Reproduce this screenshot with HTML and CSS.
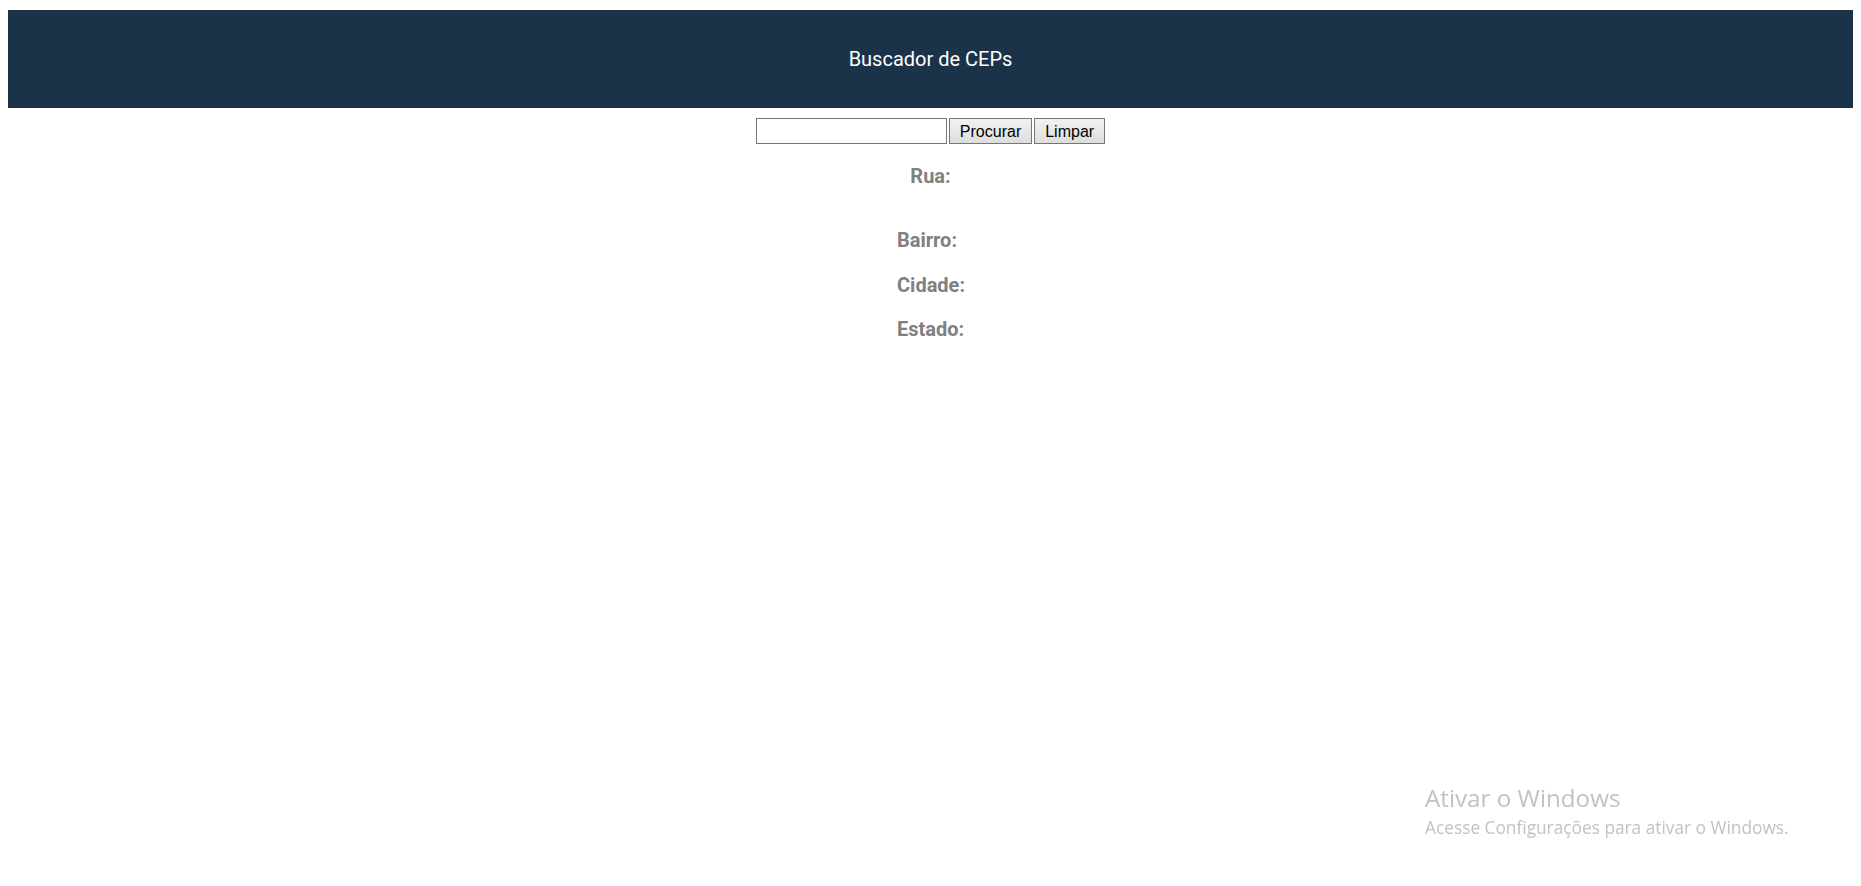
FILE: index.html
```html
<!DOCTYPE html>
<html lang="pt-BR">
<head>
<meta charset="utf-8">
<title>Buscador de CEPs</title>
<link rel="stylesheet" href="styles.css">
</head>
<body>
<header class="topbar">
  <h1 class="title">Buscador de CEPs</h1>
</header>
<main class="content">
  <form class="search" onsubmit="return false">
    <input class="cep-input" type="text" aria-label="CEP">
    <button class="btn" type="button">Procurar</button>
    <button class="btn" type="reset">Limpar</button>
  </form>
  <p class="field field-rua">Rua:</p>
  <div class="fields">
    <p class="field">Bairro:</p>
    <p class="field">Cidade:</p>
    <p class="field">Estado:</p>
  </div>
</main>
<div class="watermark">
  <div class="wm-title">Ativar o Windows</div>
  <div class="wm-sub">Acesse Configurações para ativar o Windows.</div>
</div>
</body>
</html>
```
FILE: styles.css
```css
html, body {
  margin: 0;
  padding: 0;
  background: #ffffff;
}
body {
  padding: 10px 8px 8px 8px;
  font-family: Roboto, "Liberation Sans", sans-serif;
}
.topbar {
  height: 98px;
  background: #1a3349;
  display: flex;
  align-items: center;
  justify-content: center;
}
.title {
  margin: 0;
  font-size: 20px;
  font-weight: 400;
  color: #ffffff;
  line-height: 23px;
}
.content {
  display: flex;
  flex-direction: column;
  align-items: center;
}
.search {
  margin: 10px 0 0 0;
  display: flex;
  gap: 1px;
  height: 26px;
}
.cep-input {
  box-sizing: border-box;
  width: 191px;
  height: 26px;
  margin: 0;
  border: 1px solid #767676;
  padding: 0 4px;
  font-family: "Liberation Sans", Arial, sans-serif;
  font-size: 16px;
}
.btn {
  box-sizing: border-box;
  height: 26px;
  margin: 0 0 0 1px;
  padding: 1px 10px 0 10px;
  border: 1px solid #767676;
  border-radius: 0;
  background: linear-gradient(#f2f2f2, #dddddd);
  font-family: "Liberation Sans", Arial, sans-serif;
  font-size: 16px;
  color: #000;
}
.field {
  margin: 0;
  font-size: 20px;
  font-weight: 700;
  line-height: 23.4px;
  color: #808080;
}
.field-rua {
  margin-top: 21px;
  margin-bottom: 41px;
  text-align: center;
}
.fields {
  display: flex;
  flex-direction: column;
  gap: 21px;
  width: 67px;
}
.watermark {
  position: fixed;
  left: 1425px;
  top: 784px;
  color: #c2c2c2;
  font-family: "Open Sans", "Noto Sans", sans-serif;
}
.wm-title {
  font-size: 24.2px;
  line-height: 28px;
}
.wm-sub {
  font-size: 17.3px;
  line-height: 31px;
}
```
